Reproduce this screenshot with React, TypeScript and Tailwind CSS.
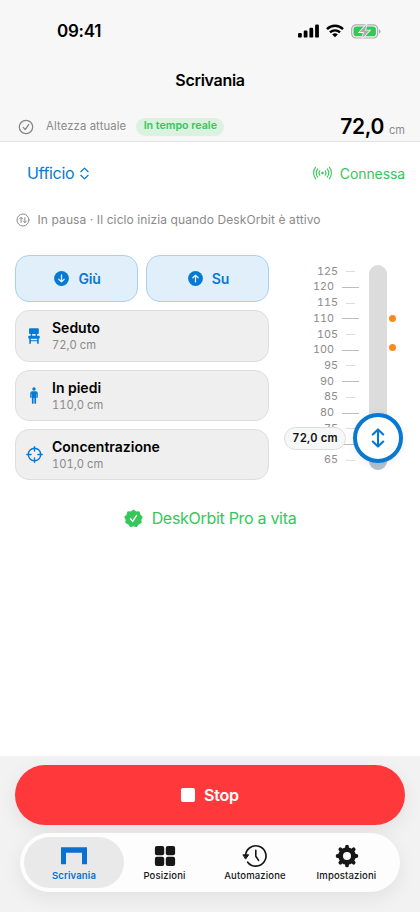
import type { ReactNode } from 'react';

interface Preset {
  name: string;
  height: string;
  icon: ReactNode;
}

interface Tab {
  label: string;
  icon: ReactNode;
  className: string;
}

function SignalIcon() {
  return (
    <svg width="21" height="14" viewBox="0 0 21 14" fill="currentColor">
      <rect x="0" y="9" width="3.8" height="4.6" rx="1.2" />
      <rect x="5.7" y="6.6" width="3.8" height="7" rx="1.2" />
      <rect x="11.4" y="3.8" width="3.8" height="9.8" rx="1.2" />
      <rect x="17.1" y="0.4" width="3.8" height="13.2" rx="1.2" />
    </svg>
  );
}

function WifiIcon() {
  return (
    <svg width="18" height="14" viewBox="0 0 18 14" fill="none" stroke="currentColor" strokeWidth="2.4">
      <path d="M1 5.1a11.4 11.4 0 0 1 16 0" />
      <path d="M4 8.4a7.1 7.1 0 0 1 10 0" />
      <path d="M9 13.3l-2.8-2.8a4 4 0 0 1 5.6 0z" fill="currentColor" stroke="none" />
    </svg>
  );
}

function BatteryIcon() {
  return (
    <svg width="30" height="15" viewBox="0 0 30 15">
      <rect x="0.7" y="0.8" width="26" height="13.2" rx="4.4" fill="none" stroke="#abaeae" strokeWidth="1.2" />
      <path d="M28 5.2q1.6.7 1.6 2.2T28 9.6z" fill="#abaeae" />
      <rect x="2.5" y="2.6" width="22.4" height="9.6" rx="2.8" fill="#34c759" />
      <path d="M15.6.4 8.6 8.1h4.3l-1.6 6.2 7.2-7.7h-4.4z" fill="#a9acac" stroke="#f7f7f7" strokeWidth="1.6" paintOrder="stroke" />
    </svg>
  );
}

function CheckCircleIcon() {
  return (
    <svg width="16" height="16" viewBox="0 0 16 16" fill="none" stroke="#858585" strokeWidth="1.25" strokeLinecap="round" strokeLinejoin="round">
      <circle cx="8" cy="8" r="6.7" />
      <path d="m5.2 8.4 2 2.3 3.6-5.3" />
    </svg>
  );
}

function AntennaIcon() {
  return (
    <svg width="19" height="14" viewBox="0 0 20 14" fill="none" stroke="#34c759" strokeWidth="1.15" strokeLinecap="round">
      <circle cx="10" cy="7" r="1.3" fill="#34c759" stroke="none" />
      <path d="M7.2 4.6a4 4 0 0 0 0 4.8M12.8 4.6a4 4 0 0 1 0 4.8" />
      <path d="M5 2.7a7.2 7.2 0 0 0 0 8.6M15 2.7a7.2 7.2 0 0 1 0 8.6" />
      <path d="M2.8.8a10 10 0 0 0 0 12.4M17.2.8a10 10 0 0 1 0 12.4" />
    </svg>
  );
}

function CycleIcon() {
  return (
    <svg width="14" height="14" viewBox="0 0 14 14" fill="none" stroke="#8a8a8a" strokeWidth="1" strokeLinecap="round" strokeLinejoin="round">
      <circle cx="7" cy="7" r="6" />
      <path d="M5.1 9.4V4.4M3.5 6l1.6-1.6L6.7 6M8.9 4.6v5M7.3 8l1.6 1.6L10.5 8" />
    </svg>
  );
}

function ArrowCircleIcon({ up }: { up?: boolean }) {
  return (
    <svg width="15" height="15" viewBox="0 0 15 15">
      <circle cx="7.5" cy="7.5" r="7.4" fill="#0579d3" />
      <path
        d={up ? 'M7.5 11V4.3M4.8 6.8l2.7-2.7 2.7 2.7' : 'M7.5 4v6.7M4.8 8.2l2.7 2.7 2.7-2.7'}
        fill="none"
        stroke="#e1effa"
        strokeWidth="1.3"
        strokeLinecap="round"
        strokeLinejoin="round"
      />
    </svg>
  );
}

function ChairIcon() {
  return (
    <svg width="12" height="16" viewBox="0 0 12 16" fill="#0579d3">
      <rect x="1" y="0.3" width="9.8" height="5.8" rx="1" />
      <path d="M2.7 6h1.5v2.2H2.7zM7.6 6h1.5v2.2H7.6z" />
      <rect x="0.3" y="7.8" width="11.4" height="3" rx="0.8" />
      <path d="M1.3 10.5h1.6v5.3H1.3zM9.1 10.5h1.6v5.3H9.1zM2.5 12.2h7v1.1h-7z" />
    </svg>
  );
}

function PersonIcon() {
  return (
    <svg width="10" height="17" viewBox="0 0 10 17" fill="#0579d3">
      <circle cx="5" cy="2" r="1.7" />
      <path d="M3.2 4.2h3.6A2 2 0 0 1 8.8 6.2v4a.7.7 0 0 1-1.4 0V6.8h-.3v9.1a.8.8 0 0 1-1.7 0v-5h-.8v5a.8.8 0 0 1-1.7 0V6.8h-.3v3.4a.7.7 0 0 1-1.4 0v-4a2 2 0 0 1 2-2z" />
    </svg>
  );
}

function TargetIcon() {
  return (
    <svg width="17" height="17" viewBox="0 0 17 17" fill="none" stroke="#0579d3" strokeWidth="1.4" strokeLinecap="round">
      <circle cx="8.5" cy="8.5" r="6.2" />
      <path d="M8.5.8v4.3M8.5 11.9v4.3M.8 8.5h4.3M11.9 8.5h4.3" />
    </svg>
  );
}

function SealIcon() {
  return (
    <svg width="19" height="19" viewBox="0 0 19 19">
      <path
        d="M9.5 1.3 11.9 3.1 15 2.9 15.8 5.9 18 8 16.7 10.7 17 13.6 14.2 14.9 12.5 17.4 9.5 16.7 6.5 17.4 4.8 14.9 2 13.6 2.3 10.7 1 8 3.2 5.9 4 2.9 7.1 3.1z"
        fill="#34c759"
        stroke="#34c759"
        strokeWidth="1.3"
        strokeLinejoin="round"
      />
      <path d="m6.5 9.8 2.2 2.6 3.9-6" fill="none" stroke="#fff" strokeWidth="1.4" strokeLinecap="round" strokeLinejoin="round" />
    </svg>
  );
}

function DeskIcon() {
  return (
    <svg width="26" height="22" viewBox="0 0 26 22">
      <path d="M0 2.2h26v17h-5V7.7H5v11.5H0z" fill="#0870cf" />
    </svg>
  );
}

function GridIcon() {
  return (
    <svg width="22" height="22" viewBox="0 0 22 22" fill="currentColor">
      <rect x="0.9" y="0.9" width="9.3" height="9.3" rx="2" />
      <rect x="11.8" y="0.9" width="9.3" height="9.3" rx="2" />
      <rect x="0.9" y="11.8" width="9.3" height="9.3" rx="2" />
      <rect x="11.8" y="11.8" width="9.3" height="9.3" rx="2" />
    </svg>
  );
}

function HistoryIcon() {
  return (
    <svg width="26" height="24" viewBox="0 0 26 24" fill="none" stroke="currentColor" strokeWidth="1.7" strokeLinecap="round" strokeLinejoin="round">
      <path d="M3.6 12A10.2 10.2 0 1 1 5.7 18.2" />
      <path d="M13.8 6.2v6l2.8 4.2" strokeWidth="1.6" />
      <path d="M1.3 10.8h5.4l-2.9 4z" fill="currentColor" strokeWidth="1" />
    </svg>
  );
}

function GearIcon() {
  return (
    <svg width="24" height="24" viewBox="0 0 24 24" fill="none" stroke="currentColor">
      <circle cx="12" cy="12" r="6.4" strokeWidth="4.8" />
      <path
        d="M12 2.6v2M12 19.4v2M2.6 12h2M19.4 12h2M5.35 5.35l1.4 1.4M17.25 17.25l1.4 1.4M18.65 5.35l-1.4 1.4M6.75 17.25l-1.4 1.4"
        strokeWidth="3.8"
        strokeLinecap="round"
      />
    </svg>
  );
}

const presets: Preset[] = [
  { name: 'Seduto', height: '72,0 cm', icon: <ChairIcon /> },
  { name: 'In piedi', height: '110,0 cm', icon: <PersonIcon /> },
  { name: 'Concentrazione', height: '101,0 cm', icon: <TargetIcon /> },
];

const tabs: Tab[] = [
  { label: 'Scrivania', icon: <DeskIcon />, className: 'w-[100px] rounded-full bg-[#e9e9e9] text-[#0870cf] font-semibold' },
  { label: 'Posizioni', icon: <GridIcon />, className: 'w-[81px] text-[#171717] font-medium' },
  { label: 'Automazione', icon: <HistoryIcon />, className: 'w-[100px] text-[#171717] font-medium' },
  { label: 'Impostazioni', icon: <GearIcon />, className: 'w-[83px] text-[#171717] font-medium' },
];

const marks = [125, 120, 115, 110, 105, 100, 95, 90, 85, 80, 75, 70, 65];

function HeightScale() {
  return (
    <div className="relative h-[225px] flex-1 pt-[9px]">
      {marks.map((mark) => {
        const major = mark % 10 === 0;
        return (
          <div key={mark} className="flex h-[15.7px] items-center">
            <span
              className={
                major
                  ? 'w-[65px] text-right text-[10.8px] tabular-nums text-[#8c8c8c]'
                  : 'w-[69px] text-right text-[10.8px] tabular-nums text-[#8c8c8c]'
              }
            >
              {/* 70 sits under the height label */}
              {mark === 70 ? '' : mark}
            </span>
            <span className={major ? 'ml-2 h-px w-[17px] bg-[#bcbcbc]' : 'ml-2 h-px w-[9px] bg-[#dddddd]'} />
          </div>
        );
      })}

      {/* track */}
      <div className="absolute left-[100px] top-[10px] flex h-[205px] w-[18px] flex-col justify-end overflow-hidden rounded-full bg-[#dcdcdc]">
        <div className="h-[32px] bg-[#b5c3d0]" />
      </div>

      {/* preset markers */}
      <span className="absolute left-[120px] top-[60px] size-[7px] rounded-full bg-[#f78b20]" />
      <span className="absolute left-[120px] top-[88.5px] size-[7px] rounded-full bg-[#f78b20]" />

      {/* current height */}
      <div className="absolute left-[15px] top-[172px] flex h-[23px] w-[62px] items-center justify-center rounded-full border border-[#dedede] bg-[#f6f7f7] text-[11.2px] font-semibold tracking-[0.15px] whitespace-nowrap text-[#111] tabular-nums">
        72,0 cm
      </div>
      <div className="absolute left-[84px] top-[158px] flex size-[50px] items-center justify-center rounded-full border-4 border-[#0878d1] bg-white shadow-[0_2px_8px_rgba(0,0,0,0.08)]">
        <svg width="14" height="20" viewBox="0 0 14 20" fill="none" stroke="#0878d1" strokeWidth="2.1" strokeLinecap="round" strokeLinejoin="round">
          <path d="M7 1.5v17M1.8 6.4 7 1.4l5.2 5M1.8 13.6l5.2 5 5.2-5" />
        </svg>
      </div>
    </div>
  );
}

export default function App() {
  return (
    <div className="flex h-[912px] w-[420px] flex-col overflow-hidden bg-white font-['Inter','Liberation_Sans',sans-serif] whitespace-nowrap text-black">
      <header className="flex h-[142px] shrink-0 flex-col border-b border-[#e3e3e3] bg-[#f7f7f7]">
        <div className="flex h-[62px] items-center justify-between pr-[39px] pl-[57px]">
          <span className="pt-[2px] text-[17px] font-semibold tracking-[-0.25px]">09:41</span>
          <div className="flex items-center gap-[7px]">
            <SignalIcon />
            <WifiIcon />
            <BatteryIcon />
          </div>
        </div>
        <h1 className="flex h-[36px] items-center justify-center text-[16px] font-semibold tracking-[-0.3px]">Scrivania</h1>
        <div className="mt-[14px] flex h-[29px] items-center pr-[15px] pl-[18px]">
          <CheckCircleIcon />
          <span className="ml-3 text-[11.3px] tracking-[0.12px] text-[#8a8a8a]">Altezza attuale</span>
          <span className="ml-[10px] flex h-[18px] w-[88px] items-center justify-center rounded-full bg-[#dcf2e1] text-[10.7px] font-semibold text-[#34c759]">
            In tempo reale
          </span>
          <div className="ml-auto flex items-baseline gap-[5px] pt-px">
            <span className="text-[21px] font-semibold tracking-[-0.3px]">72,0</span>
            <span className="text-[11px] text-[#8a8a8a]">cm</span>
          </div>
        </div>
      </header>

      <div className="flex h-[62px] shrink-0 items-center justify-between pr-[15px] pl-[27px]">
        <div className="flex items-center gap-[6px] text-[16px] text-[#0879d2]">
          <span className="tracking-[-0.35px]">Ufficio</span>
          <svg width="9" height="13" viewBox="0 0 10 14" fill="none" stroke="currentColor" strokeWidth="1.4" strokeLinecap="round" strokeLinejoin="round">
            <path d="M1 5 5 1l4 4M1 9l4 4 4-4" />
          </svg>
        </div>
        <div className="flex items-center gap-[8px] text-[14px] text-[#34c759]">
          <AntennaIcon />
          <span className="tracking-[-0.1px]">Connessa</span>
        </div>
      </div>

      <div className="mt-px flex h-[30px] shrink-0 items-center gap-[8px] pl-[15.5px] text-[12px] tracking-[0.1px] text-[#8a8a8a]">
        <CycleIcon />
        <span>In pausa · Il ciclo inizia quando DeskOrbit è attivo</span>
      </div>

      <main className="mt-[20px] flex shrink-0 pl-[15px]">
        <div className="flex w-[254px] flex-col gap-2">
          <div className="grid h-[47.4px] grid-cols-2 gap-2 text-[14px] font-semibold text-[#0579d3]">
            <button className="flex items-center justify-center gap-[9px] rounded-[14px] border border-[#a8d1f0] bg-[#e1effa] pl-[2px]">
              <ArrowCircleIcon />
              <span className="tracking-[-0.2px]">Giù</span>
            </button>
            <button className="flex items-center justify-center gap-[9px] rounded-[14px] border border-[#a8d1f0] bg-[#e1effa] pl-[2px]">
              <ArrowCircleIcon up />
              <span className="tracking-[-0.2px]">Su</span>
            </button>
          </div>
          {presets.map((preset) => (
            <button key={preset.name} className="flex h-[51.2px] items-center rounded-[14px] border border-[#dedede] bg-[#efefef] text-left">
              <span className="flex w-9 justify-center">{preset.icon}</span>
              <span className="flex flex-col pt-px">
                <span className="text-[14px] leading-[18px] font-semibold">{preset.name}</span>
                <span className="text-[11.2px] leading-4 text-[#8a8a8a] tabular-nums">{preset.height}</span>
              </span>
            </button>
          ))}
        </div>
        <HeightScale />
      </main>

      <div className="mt-[26px] flex h-[24px] shrink-0 items-center justify-center gap-[9px] text-[16px] text-[#34c759]">
        <SealIcon />
        <span className="tracking-[-0.3px]">DeskOrbit Pro a vita</span>
      </div>

      <footer className="mt-auto flex h-[156px] shrink-0 flex-col items-center bg-[#f2f2f2] pt-[9px]">
        <button className="flex h-[60px] w-[390px] items-center justify-center gap-[9px] rounded-full bg-[#ff383c] text-[16px] font-semibold text-white shadow-[0_6px_20px_rgba(0,0,0,0.07)]">
          <span className="size-[14px] rounded-[2px] bg-white" />
          <span className="tracking-[-0.2px]">Stop</span>
        </button>
        <nav className="mt-2 flex h-[59px] w-[380px] rounded-full bg-[#fdfdfd] p-1 shadow-[0_6px_20px_rgba(0,0,0,0.07)]">
          {tabs.map((tab) => (
            <button key={tab.label} className={`flex flex-col items-center pt-[7px] ${tab.className}`}>
              <span className="flex h-6 items-center">{tab.icon}</span>
              <span className="mt-[2px] text-[9.5px] leading-3 tracking-[0.15px]">{tab.label}</span>
            </button>
          ))}
        </nav>
      </footer>
    </div>
  );
}
